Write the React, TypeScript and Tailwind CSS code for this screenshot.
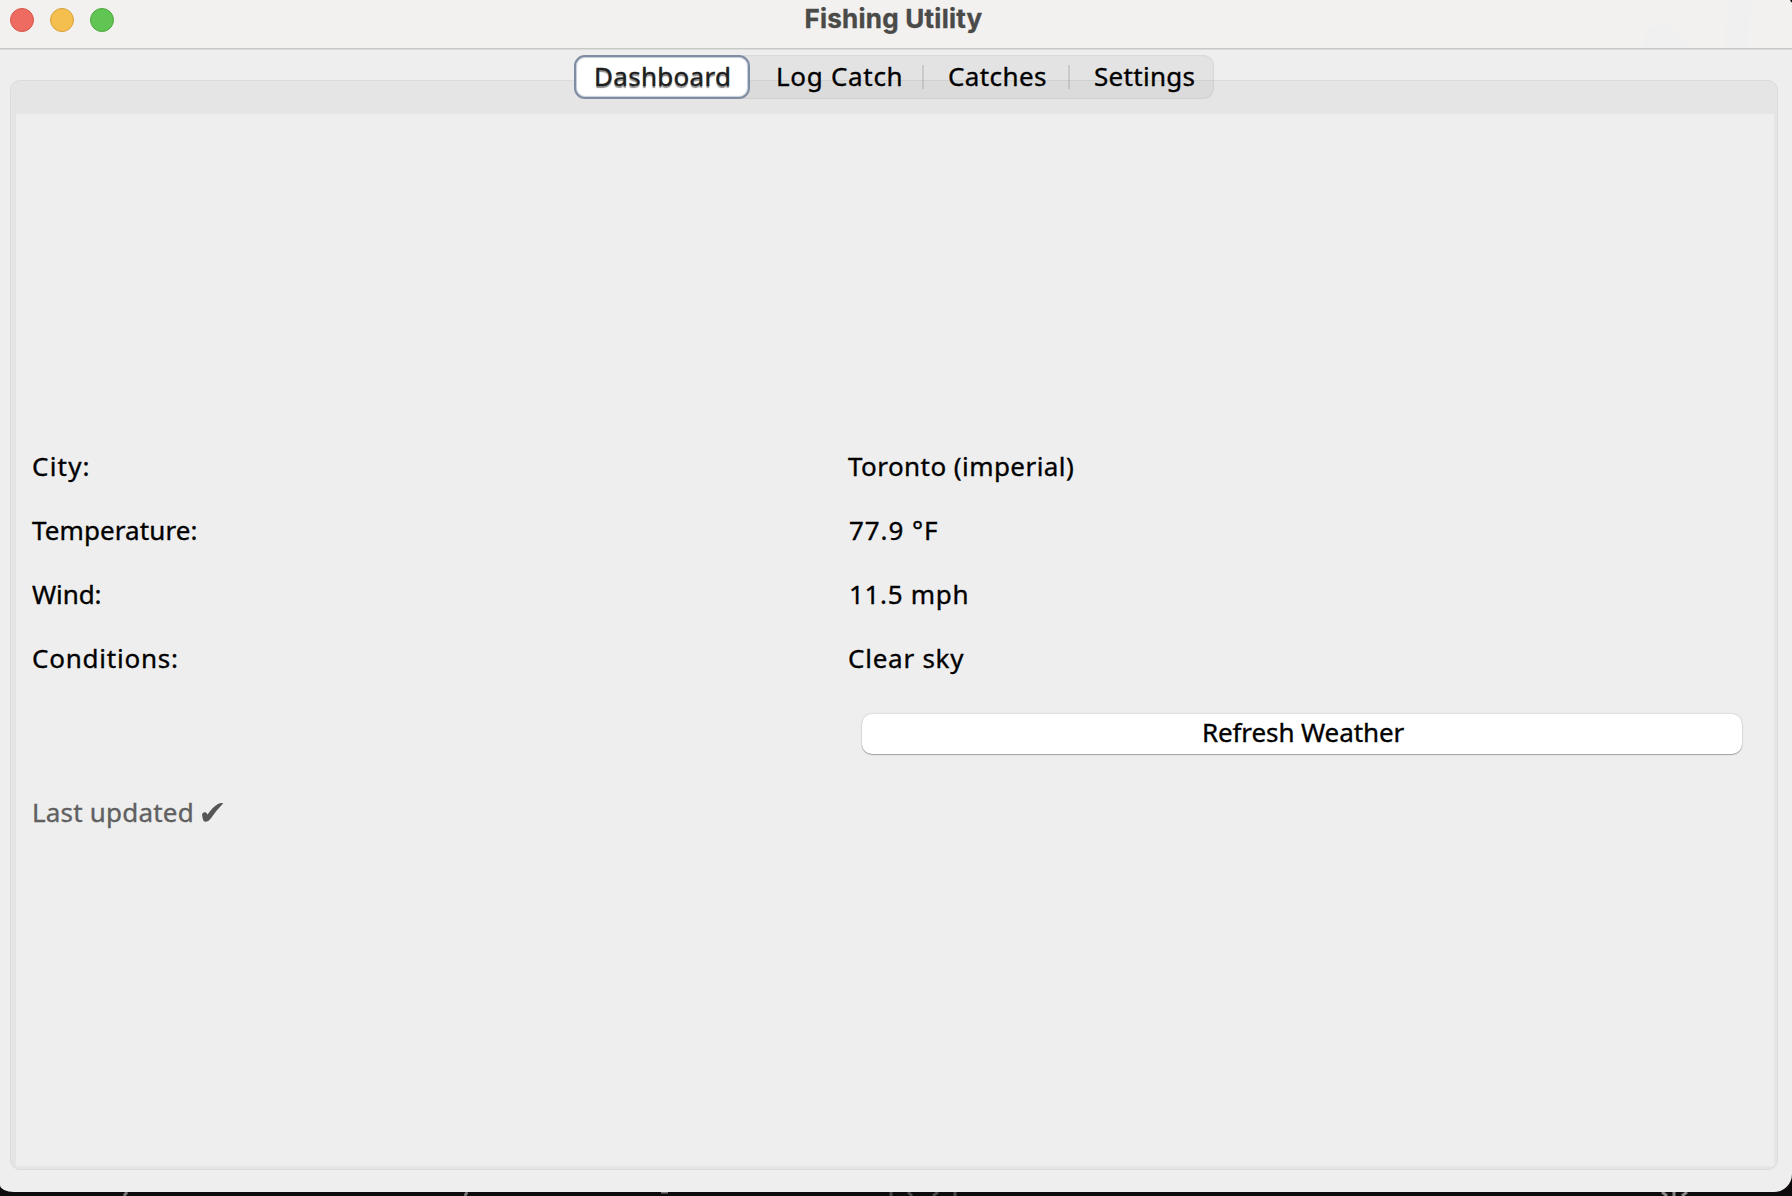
import React from "react";

const weather = [
  { label: "City:", labelClass: "tracking-[1.2px]", value: "Toronto (imperial)", valueClass: "tracking-[0.44px]" },
  { label: "Temperature:", labelClass: "tracking-[0.1px]", value: "77.9 °F", valueClass: "pl-px tracking-[0.92px]" },
  { label: "Wind:", labelClass: "tracking-[-0.1px]", value: "11.5 mph", valueClass: "pl-px tracking-[0.68px]" },
  { label: "Conditions:", labelClass: "tracking-[0.77px]", value: "Clear sky", valueClass: "tracking-[0.75px]" },
];

function TitleBar() {
  return (
    <header className="relative flex h-[50px] items-start border-b border-[#dcdcdc] bg-[#f2f1ef] shadow-[inset_0_-1px_0_#c6c7c6]">
      <svg className="absolute top-0 right-0" width="200" height="48" viewBox="0 0 200 48">
        <path d="M51 48 C53 32 57 26 66 26 L78 25 C86 27 90 36 95 48Z" fill="#f0f0f0" />
        <path d="M134 0 H160 Q155 22 156 48 H133Z" fill="#f0f0f0" />
        <path d="M198 0 H200 V2.500 L199 2Z" fill="#111" />
      </svg>
      <div className="flex gap-4 pt-2 pl-2.5">
        <span className="size-6 rounded-full border border-[#d8554a] bg-[#ed6b60]" />
        <span className="size-6 rounded-full border border-[#d9a03c] bg-[#f5bf4f]" />
        <span className="size-6 rounded-full border border-[#4fa73f] bg-[#61c554]" />
      </div>
      <h1 className="absolute inset-x-0 top-0 pr-[5px] text-center font-['Inter'] text-[26px] leading-[38px] font-bold tracking-[0.24px] text-[#4a4a49]">
        Fishing Utility
      </h1>
    </header>
  );
}

function Tabs() {
  return (
    <nav className="relative z-10 mx-auto -mb-[19px] flex h-11 w-[640px] -translate-x-0.5 rounded-[11px] bg-black/[0.045] text-[26px] leading-[42px] shadow-[inset_0_0_2px_rgba(0,0,0,0.16)]">
      <button className="flex h-11 w-44 rounded-[11px] border-2 border-[#7f8da3] bg-white pl-[18px] leading-[38px] tracking-[0.3px] text-[#1e1e1e] shadow-[inset_0_0_1px_1px_rgba(127,141,163,0.45)] [text-shadow:0_2px_1px_rgba(0,0,0,0.45)]">
        Dashboard
      </button>
      <button className="flex w-[172px] pl-[26px] tracking-[0.7px]">Log Catch</button>
      <span className="mt-2.5 h-6 w-0.5 bg-black/10" />
      <button className="flex w-36 pl-6 tracking-[0.4px]">Catches</button>
      <span className="mt-2.5 h-6 w-0.5 bg-black/10" />
      <button className="flex pl-6 tracking-[0.3px]">Settings</button>
    </nav>
  );
}

function Dashboard() {
  return (
    <main className="mr-[14px] ml-2.5 h-[1090px] rounded-[10px] border border-[#dbdbdb] bg-[#e5e5e5] pt-[33px] pr-[3px] pb-[3px] pl-[5px]">
      <div className="h-full bg-[#eeeeee] px-4 pt-80 text-[26px]">
        <dl>
          {weather.map((row) => (
            <div key={row.label} className="grid h-16 grid-cols-[816px_1fr] leading-[64px]">
              <dt className={row.labelClass}>{row.label}</dt>
              <dd className={row.valueClass}>{row.value}</dd>
            </div>
          ))}
        </dl>
        <button className="mt-6 ml-[830px] flex h-10 w-[880px] justify-center rounded-[10px] bg-white pl-0.5 leading-[36px] tracking-[-0.1px] shadow-[0_1px_1px_rgba(0,0,0,0.28),0_0_2px_rgba(0,0,0,0.22)]">
          Refresh Weather
        </button>
        <p className="mt-[26px] flex leading-[64px] tracking-[0.2px] text-[#606060]">
          Last updated
          <svg className="mt-[21px] ml-[7px]" width="23" height="22" viewBox="0 0 23 22" fill="#555">
            <path d="M1 13.500 Q1.800 10.800 4.500 11.300 Q6.300 11.800 6.400 13.800 Q11 6.500 17 3 Q20 1.300 22.300 2.200 Q15.500 9 9.600 17.800 Q7 21.200 4.200 20.800 Q2.200 20.500 1.700 17.500Z" />
          </svg>
        </p>
      </div>
    </main>
  );
}

export default function App() {
  return (
    <div className="h-[1196px] w-[1792px] overflow-hidden bg-[#0d0b0c] font-['Noto_Sans','Open_Sans',sans-serif] text-black [-webkit-text-stroke:0.35px_currentColor]">
      <div className="h-[1192px] overflow-hidden rounded-br-[18px] [border-bottom-left-radius:14px_7px] bg-[#eeeeee]">
        <TitleBar />
        <div className="pt-[5px]">
          <Tabs />
          <Dashboard />
        </div>
      </div>
      <svg className="block" width="1792" height="4" viewBox="0 0 1792 4" fill="none" stroke="#777" strokeWidth="3">
        <path d="M127 0 L124 4 M467 0 L465 4" />
        <path d="M661 .5 H668" strokeWidth="2" />
        <path d="M891 0 V4 M908 0 L912 4 M938 0 L933 4 M955 0 V4" stroke="#4a4a4a" />
        <path d="M1662 0 L1667 4 M1674 0 V4 M1687 0 L1682 4" stroke="#888" />
      </svg>
    </div>
  );
}
